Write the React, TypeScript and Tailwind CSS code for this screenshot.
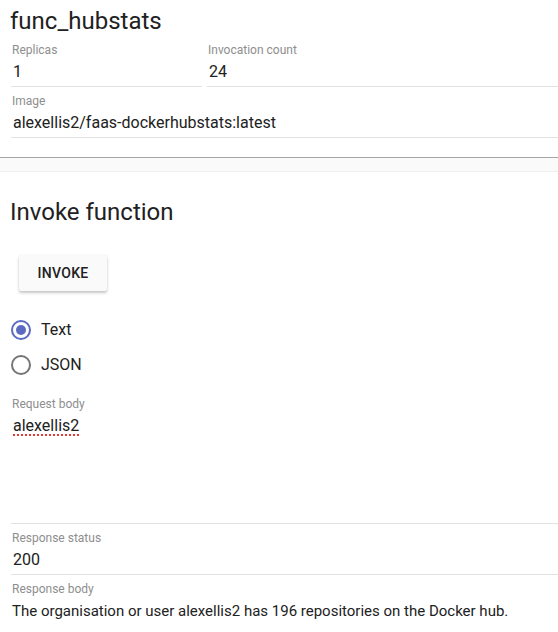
import React from "react";

function Field({ label, value, className = "" }: { label: string; value: string; className?: string }) {
  return (
    <div className={`pt-[6px] pb-[2px] border-b border-[#e2e2e2] ${className}`}>
      <div className="text-[12px] leading-[16px] text-[#8e8e8e] pl-[1px]">{label}</div>
      <div className="mt-[2px] text-[16px] leading-[24px] text-[#212121] pl-[2px]">{value}</div>
    </div>
  );
}

function Radio({ checked, label }: { checked: boolean; label: string }) {
  return (
    <div className="flex items-center h-[35px]">
      <div
        className={`w-[20px] h-[20px] rounded-full border-2 flex items-center justify-center ${
          checked ? "border-[#5c6bc0]" : "border-[#757575]"
        }`}
      >
        {checked && <div className="w-[10px] h-[10px] rounded-full bg-[#5c6bc0]" />}
      </div>
      <span className="ml-[10px] text-[16px] leading-[24px] text-[#212121]">{label}</span>
    </div>
  );
}

export default function App() {
  return (
    <div className="w-[558px] min-h-[632px] bg-white font-['Roboto',sans-serif] text-[#212121] overflow-hidden">
      <div className="pt-[6px] pb-[19px] pl-[11px]">
        <h1 className="text-[24px] leading-[30px] -ml-[1px]">func_hubstats</h1>
        <div className="flex gap-[5px]">
          <Field label="Replicas" value="1" className="w-[191px]" />
          <Field label="Invocation count" value="24" className="flex-1" />
        </div>
        <Field label="Image" value="alexellis2/faas-dockerhubstats:latest" />
      </div>
      <div className="border-t border-[#a6a6a6] h-[15px] bg-[#fafafa] border-b border-b-[#efefef]" />
      <div className="pl-[11px] pt-[24px]">
        <h2 className="text-[24px] leading-[32px] -ml-[1px]">Invoke function</h2>
        <button className="mt-[27px] ml-[8px] w-[88px] h-[36px] rounded-[2px] bg-[#fafafa] shadow-[0_2px_3px_rgba(0,0,0,0.22),0_0_1px_rgba(0,0,0,0.12)] text-[14px] font-medium tracking-[0.3px] text-[#212121]">
          INVOKE
        </button>
        <div className="mt-[21px]">
          <Radio checked label="Text" />
          <Radio checked={false} label="JSON" />
        </div>
        <div className="mt-[14px] pb-[2px] border-b border-[#e2e2e2]">
          <div className="text-[12px] leading-[16px] text-[#8e8e8e] pl-[1px]">Request body</div>
          <div className="mt-[2px] h-[107px] text-[16px] leading-[24px] pl-[2px]">
            <span className="underline decoration-dotted decoration-[#e53935] decoration-2 underline-offset-[3px]">
              alexellis2
            </span>
          </div>
        </div>
        <Field label="Response status" value="200" />
        <div className="pt-[6px]">
          <div className="text-[12px] leading-[16px] text-[#8e8e8e] pl-[1px]">Response body</div>
          <div className="mt-[2px] text-[15px] leading-[24px] pl-[1px] whitespace-nowrap">
            The organisation or user alexellis2 has 196 repositories on the Docker hub.
          </div>
        </div>
      </div>
    </div>
  );
}
